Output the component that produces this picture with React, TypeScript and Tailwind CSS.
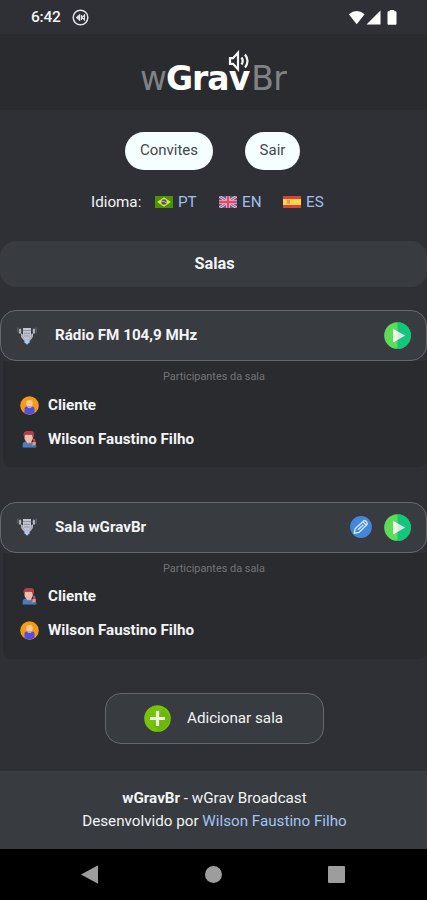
import React from 'react';

function CastIcon() {
  return (
    <svg className="ml-[11px] h-[17px] w-[17px]" viewBox="0 0 17 17" fill="none" stroke="#e4e4e6">
      <circle cx="8.5" cy="8.5" r="7.3" strokeWidth="1.5" />
      <path d="M4 8.500 8 5v7z" fill="#e4e4e6" strokeWidth=".5" />
      <path d="M9.500 6v5M12.500 6l-2.500 2.500 2.500 2.500z" strokeWidth="1.100" />
    </svg>
  );
}

function StatusIcons() {
  return (
    <svg className="h-[18px] w-[51px]" viewBox="0 0 51 18" fill="#fff">
      <path d="M.8 5.200Q8.700 -1.200 16.600 5.200L8.700 15.300z" />
      <path d="M18.500 15.500 32.500 1.500v14z" />
      <path d="M39.500 3.200q0-1 1-1h1.200V1h4.600v1.200h1.200q1 0 1 1v11.500q0 1-1 1h-7q-1 0-1-1z" />
    </svg>
  );
}

function Speaker() {
  return (
    <svg className="absolute left-[87px] top-[-1px] h-[22px] w-[23px]" viewBox="0 0 23 22" fill="none" stroke="#f5f5f5" strokeWidth="2.200">
      <path d="M3 8.200h3l5-5.500v16.600l-5-5.500H3z" />
      <path d="M14.500 7.500q2.500 3.500 0 7M18 4.500q5 6.500 0 13" />
    </svg>
  );
}

function Flag({ code }: { code: string }) {
  return (
    <svg className="mr-[5px] h-[12px] w-[18px]" viewBox="0 0 18 12">
      {code === 'PT' && (
        <>
          <path fill="#459600" d="M0 0h18v12H0z" />
          <path fill="#f6df38" d="m9 1.200 6.800 4.800L9 10.800 2.200 6z" />
          <circle cx="9" cy="6" r="2.700" fill="#42558b" />
          <path d="M6.500 5.200q2.800-.2 5 1.800" stroke="#dce8d7" strokeWidth=".7" fill="none" />
        </>
      )}
      {code === 'EN' && (
        <>
          <path fill="#4862a2" d="M0 0h18v12H0z" />
          <path d="m0 0 18 12M18 0 0 12" stroke="#ece6f1" strokeWidth="2.700" />
          <path d="m0 0 18 12M18 0 0 12" stroke="#d85470" strokeWidth="1.300" />
          <path d="M9 0v12M0 6h18" stroke="#f0d4df" strokeWidth="3.600" />
          <path d="M9 0v12M0 6h18" stroke="#e34862" strokeWidth="2.400" />
        </>
      )}
      {code === 'ES' && (
        <>
          <path fill="#d8433e" d="M0 0h18v12H0z" />
          <path fill="#ffd348" d="M0 3h18v6H0z" />
          <path fill="#e39a48" d="M4 4h3v3.200l-1.500.8L4 7.200z" />
        </>
      )}
    </svg>
  );
}

function MicIcon() {
  return (
    <svg className="h-[20px] w-[20px]" viewBox="0 0 20 20">
      <path d="M2.500 3q1.700 2 0 4.500M17.500 3q-1.700 2 0 4.500" stroke="#b4bac6" strokeWidth="2" fill="none" />
      <path d="M.8 1.500v5M19.200 1.500v5" stroke="#646d78" strokeWidth="1" />
      <path fill="#9299ac" d="M4 8h12q0 5-4 7.500H8Q4 13 4 8" />
      <path fill="#c3c4d0" d="M6 2h8v8.500q-1 3-4 3t-4-3z" />
      <path d="M6 4.500h8M7 7.300h6M7 10h6" stroke="#8f95a7" strokeWidth="1" />
      <path d="M4.500 7.500v2.200q1 4.300 5.500 4.300t5.500-4.300V7.500" stroke="#bfbfce" strokeWidth="1" fill="none" />
      <path fill="#a8c9e7" d="M7.500 14h5v2.300L10 18.800l-2.500-2.500z" />
    </svg>
  );
}

function PlayIcon() {
  return (
    <svg className="h-[27px] w-[27px]" viewBox="0 0 27 27">
      <circle cx="13.500" cy="13.500" r="13.300" fill="#5bdd59" />
      <path fill="#12c77b" d="M13.500.2a13.300 13.300 0 0 1 0 26.600z" />
      <path fill="#d7e9df" d="M9 7l12.200 6.600L9 20.400z" />
      <path fill="#f0f3e8" d="M9 7v13.400l4.700-2.600V9.500z" />
    </svg>
  );
}

function EditIcon() {
  return (
    <svg className="h-[22px] w-[22px]" viewBox="0 0 22 22">
      <circle cx="11" cy="11" r="10.900" fill="#4586da" />
      <path d="m4.300 17.300.8-4.500 8.200-7.600q1.500-1.200 2.700 0l.8.9q1.100 1.300 0 2.600L8.900 16.400zM13 5.900l3.100 3.100M8 13.800l5.400-5" fill="none" stroke="#d0e7fc" strokeWidth="1.400" strokeLinejoin="round" />
    </svg>
  );
}

function UserIcon() {
  return (
    <svg className="h-[19px] w-[19px]" viewBox="0 0 19 19">
      <circle cx="9.500" cy="9.500" r="9.300" fill="#f49a16" />
      <path fill="#514fe0" d="M4.500 17v-4.500q0-2 2.500-2h5q2.500 0 2.500 2V17q-5 2.800-10 0" />
      <circle cx="9.500" cy="7.200" r="3.300" fill="#ffc98c" />
      <path fill="#b9a4d9" d="M7 10h5l-1 2H8z" />
    </svg>
  );
}

function HostIcon() {
  return (
    <svg className="h-[19px] w-[19px]" viewBox="0 0 19 19">
      <path fill="#4381c5" d="M2.700 17.500v-3q0-2.500 2.800-3h5q3.300.5 4 3.500v2.500z" />
      <path fill="#e5e9f2" d="m6.500 11 2.500 4.500 2.500-4.500z" />
      <path fill="#a25676" d="M8.300 12.500h1.500l.4 3.500H7.900z" />
      <path fill="#f2bba8" d="M4.500 4.500h8.300v4.200q-1 3.700-4.100 3.700T4.500 8.700z" />
      <path fill="#b63c4c" d="M3.500 6V4Q4 1 7.500 1h3.800Q14.500 1 14 5v2h-1.200l-1-2.500H5.500L4.500 6z" />
      <path fill="#b7525c" d="M13.200 8.500q2-.5 2.200 1.500v2.500h-2.200z" />
      <path fill="#e1968d" d="M12.500 12h3.300v3.700h-3.300z" />
      <path fill="#4471b0" d="M13 15.500h3.400v2H13z" />
    </svg>
  );
}

function Participant({ name, host }: { name: string; host?: boolean }) {
  return (
    <div className="flex h-[34px] items-center pl-[17px]">
      {host ? <HostIcon /> : <UserIcon />}
      <span className="ml-[9px] text-[15.2px] font-bold">{name}</span>
    </div>
  );
}

function Room({ title, editable, children }: { title: string; editable?: boolean; children: React.ReactNode }) {
  return (
    <section className="h-[157px]">
      <div className="flex h-[51px] items-center rounded-[16px] border border-[#66686d] bg-[#383b40] pr-[15px] pl-[16px]">
        <MicIcon />
        <span className="ml-[18px] flex-1 text-[15.2px] font-bold">{title}</span>
        <div className="flex items-center gap-[12px]">
          {editable && <EditIcon />}
          <PlayIcon />
        </div>
      </div>
      <div className="ml-[3px] h-[106px] rounded-b-[8px] bg-[#2a2b2e]">
        <p className="h-[27px] pt-[8px] pr-[2px] text-center text-[10.9px] leading-[16px] text-[#737478]">Participantes da sala</p>
        {children}
      </div>
    </section>
  );
}

export default function App() {
  return (
    <div className="flex h-[900px] w-[427px] flex-col overflow-hidden bg-[#2f3035] font-['Roboto',sans-serif] text-[15.2px] text-[#f3f4f5]">
      <div className="flex h-[34px] shrink-0 items-center pl-[31px] pr-[28px] pt-px">
        <span className="w-[30px] pt-px text-[15.500px] font-medium tracking-[-0.2px]">6:42</span>
        <CastIcon />
        <span className="flex-1" />
        <StatusIcons />
      </div>
      <header className="flex h-[76px] shrink-0 justify-center bg-[#2a2b2e] pt-[17px]">
        <div className="relative h-[46px] w-[147px] whitespace-nowrap pt-[9px] font-['DejaVu_Sans',sans-serif] text-[33px] leading-[38px] tracking-[-1px] text-[#818285]">
          w<b className="text-white">Grav</b><span className="ml-[2px] tracking-[-0.5px]">Br</span>
          <Speaker />
        </div>
      </header>
      <div className="mt-[22px] flex h-[38px] shrink-0 justify-center gap-[32px] pr-[2px] text-[15px] text-[#42484a]">
        <button className="w-[88px] rounded-full bg-[#f5ffff] pb-px">Convites</button>
        <button className="w-[55px] rounded-full bg-[#f5ffff] pb-px">Sair</button>
      </div>
      <div className="mt-[22px] flex h-[20px] shrink-0 items-center pl-[91px]">
        <span className="w-[64px]">Idioma:</span>
        {['PT', 'EN', 'ES'].map((code) => (
          <a key={code} className="flex w-[64px] items-center text-[#a1bfec]"><Flag code={code} />{code}</a>
        ))}
      </div>
      <h2 className="mt-[29px] flex h-[46px] shrink-0 items-center justify-center rounded-[16px] bg-[#383b40] pl-[2px] text-[16.300px] font-bold">Salas</h2>
      <main className="mt-[23px] flex shrink-0 flex-col gap-[34.5px]">
        <Room title="Rádio FM 104,9 MHz">
          <Participant name="Cliente" />
          <Participant name="Wilson Faustino Filho" host />
        </Room>
        <Room title="Sala wGravBr" editable>
          <Participant name="Cliente" host />
          <Participant name="Wilson Faustino Filho" />
        </Room>
      </main>
      <button className="mt-[34px] ml-[105px] flex h-[51px] w-[219px] shrink-0 items-center rounded-[16px] border border-[#66686d] bg-[#383b40] pl-[38px]">
        <svg className="mr-[16px] h-[27px] w-[27px]" viewBox="0 0 27 27">
          <circle cx="13.500" cy="13.500" r="13.300" fill="#77c30b" />
          <path d="m19 3 7 9q-1 11-11 14.500L9 21z" fill="#6bb70b" />
          <path d="M13.500 6v15M6 13.500h15" stroke="#edf5df" strokeWidth="3.200" />
        </svg>
        Adicionar sala
      </button>
      <footer className="mt-[27.5px] h-[78px] shrink-0 bg-[#383b40] pt-[16px] pl-[2px] text-center leading-[23px]">
        <p><b>wGravBr</b> - wGrav Broadcast</p>
        <p>Desenvolvido por <a className="text-[#a1c5f4]">Wilson Faustino Filho</a></p>
      </footer>
      <nav className="flex h-[51px] shrink-0 items-center justify-between bg-black pr-[82px] pl-[81px]">
        <svg className="h-[19px] w-[17px]" viewBox="0 0 17 19" fill="#9d9d9d"><path d="M0 9.500 17 .3v18.400z" /></svg>
        <span className="h-[17px] w-[17px] rounded-full bg-[#9d9d9d]" />
        <span className="h-[17px] w-[17px] rounded-[1px] bg-[#9d9d9d]" />
      </nav>
    </div>
  );
}
